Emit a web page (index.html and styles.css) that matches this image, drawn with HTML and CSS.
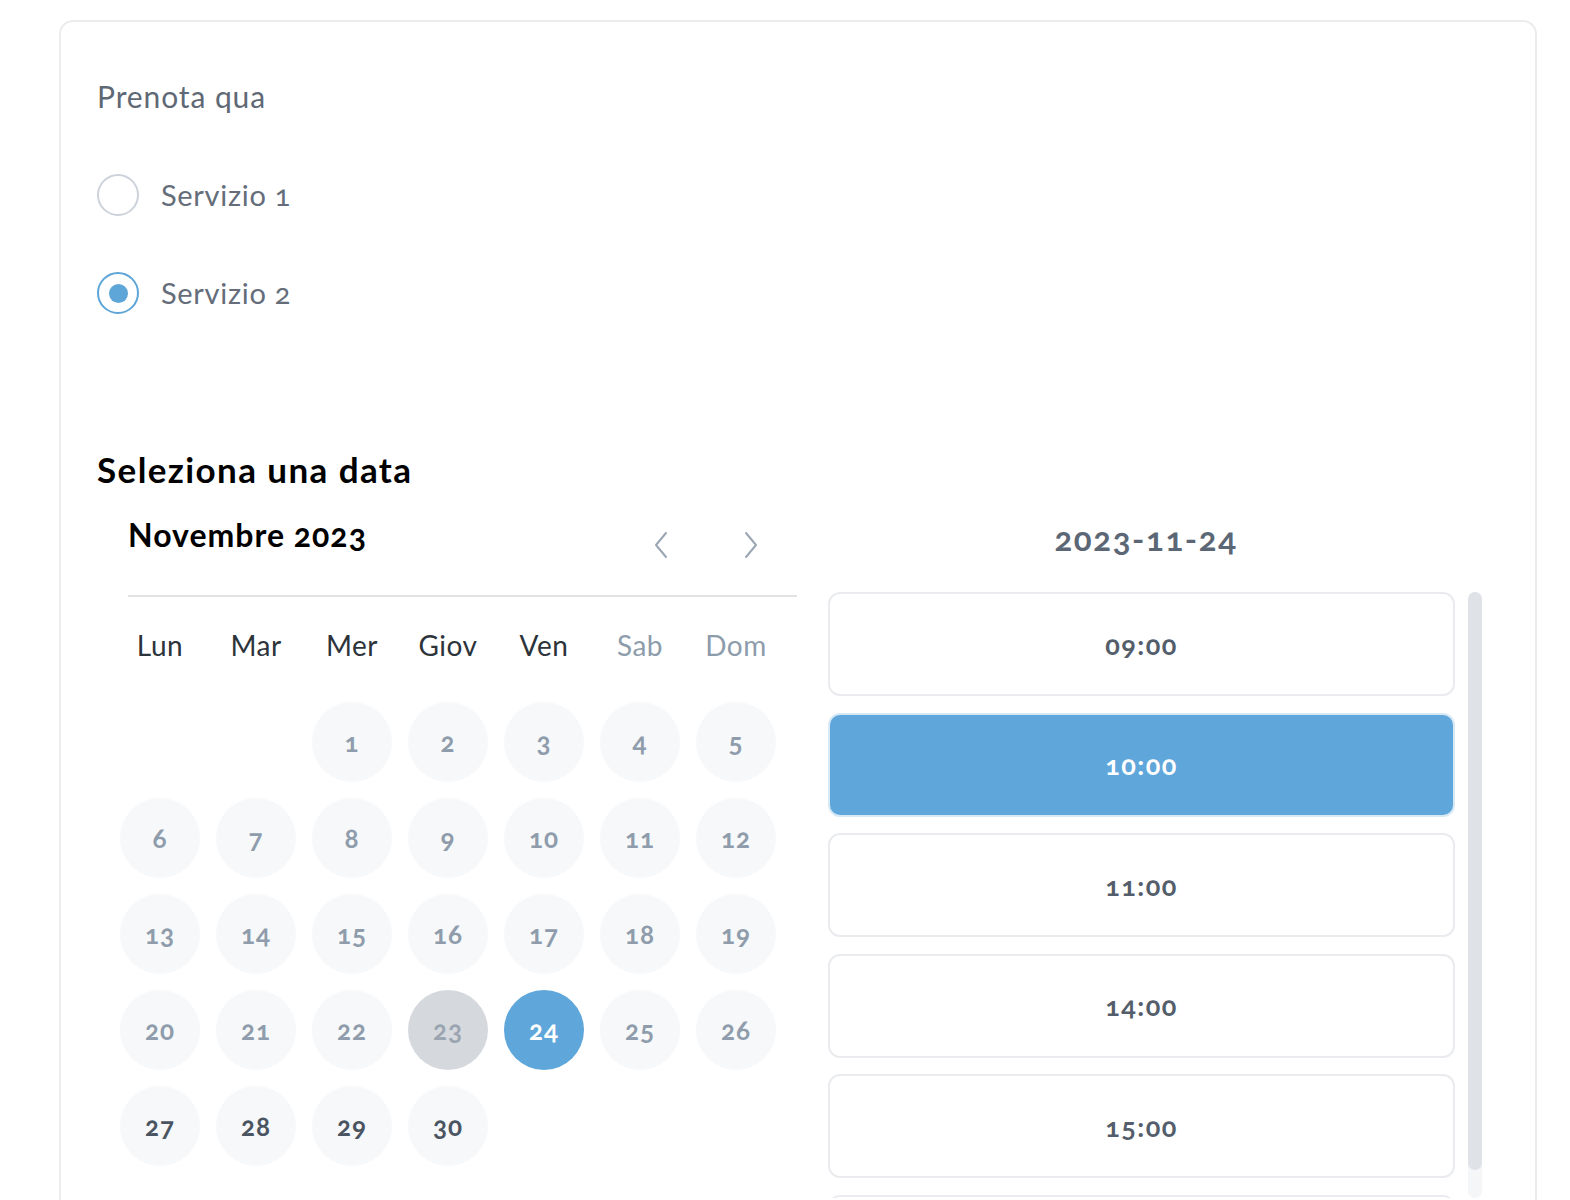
FILE: index.html
```html
<!DOCTYPE html>
<html lang="it">
<head>
    <meta charset="UTF-8">
    <meta name="viewport" content="width=device-width, initial-scale=1.0">
    <title>Prenota</title>
    <link rel="stylesheet" href="styles.css">
</head>
<body>
    <div class="card">
        <div class="section-label">Prenota qua</div>
        <div class="services">
            <label class="service">
                <span class="radio"></span>
                <span class="service-name">Servizio 1</span>
            </label>
            <label class="service">
                <span class="radio checked"></span>
                <span class="service-name">Servizio 2</span>
            </label>
        </div>

        <h2 class="date-title">Seleziona una data</h2>

        <div class="booking">
            <div class="calendar">
                <div class="cal-header">
                    <div class="month">Novembre 2023</div>
                    <div class="nav">
                        <button class="nav-btn">
                            <svg width="16" height="28" viewBox="0 0 16 28"><path d="M13 2 L3 14 L13 26" fill="none" stroke="#9aa6b3" stroke-width="2" stroke-linecap="round" stroke-linejoin="round"/></svg>
                        </button>
                        <button class="nav-btn">
                            <svg width="16" height="28" viewBox="0 0 16 28"><path d="M3 2 L13 14 L3 26" fill="none" stroke="#9aa6b3" stroke-width="2" stroke-linecap="round" stroke-linejoin="round"/></svg>
                        </button>
                    </div>
                </div>
                <div class="weekdays">
                    <span>Lun</span><span>Mar</span><span>Mer</span><span>Giov</span><span>Ven</span>
                    <span class="weekend">Sab</span><span class="weekend">Dom</span>
                </div>
                <div class="days">
                    <span class="empty"></span><span class="empty"></span>
                    <span class="day">1</span><span class="day">2</span><span class="day">3</span><span class="day">4</span><span class="day">5</span>
                    <span class="day">6</span><span class="day">7</span><span class="day">8</span><span class="day">9</span><span class="day">10</span><span class="day">11</span><span class="day">12</span>
                    <span class="day">13</span><span class="day">14</span><span class="day">15</span><span class="day">16</span><span class="day">17</span><span class="day">18</span><span class="day">19</span>
                    <span class="day">20</span><span class="day">21</span><span class="day">22</span><span class="day today">23</span><span class="day selected">24</span><span class="day">25</span><span class="day">26</span>
                    <span class="day open">27</span><span class="day open">28</span><span class="day open">29</span><span class="day open">30</span>
                </div>
            </div>

            <div class="times">
                <div class="times-title">2023-11-24</div>
                <div class="times-body">
                    <div class="slots">
                        <button class="slot">09:00</button>
                        <button class="slot active">10:00</button>
                        <button class="slot">11:00</button>
                        <button class="slot">14:00</button>
                        <button class="slot">15:00</button>
                        <button class="slot"></button>
                    </div>
                    <div class="scrollbar"><div class="thumb"></div></div>
                </div>
            </div>
        </div>
    </div>
</body>
</html>
```

FILE: styles.css
```css
html, body {
    margin: 0;
    padding: 0;
    height: 1200px;
    overflow: hidden;
}
body {
    font-family: Lato, "Open Sans", sans-serif;
    font-variant-numeric: oldstyle-nums;
    background: #ffffff;
    color: #5f6875;
}
.card {
    box-sizing: border-box;
    margin: 20px 0 0 59px;
    width: 1478px;
    min-height: 1300px;
    border: 2px solid #ececec;
    border-radius: 14px;
    padding: 54px 36px 0 36px;
}
.section-label {
    font-size: 30px;
    line-height: 40px;
    letter-spacing: 0.9px;
    color: #5f6875;
}
.services {
    margin-top: 58px;
    display: flex;
    flex-direction: column;
    gap: 56px;
}
.service {
    display: flex;
    align-items: center;
    gap: 22px;
}
.radio {
    width: 38px;
    height: 38px;
    border: 2px solid #cdd3da;
    border-radius: 50%;
    display: flex;
    align-items: center;
    justify-content: center;
}
.radio.checked {
    border-color: #5ea5d8;
}
.radio.checked::after {
    content: "";
    width: 19px;
    height: 19px;
    border-radius: 50%;
    background: #5ea5d8;
}
.service-name {
    font-size: 29px;
    line-height: 40px;
    letter-spacing: 0.7px;
    color: #646d79;
}
.date-title {
    margin: 133px 0 0 0;
    font-size: 35px;
    line-height: 44px;
    font-weight: 700;
    letter-spacing: 1.4px;
    color: #000;
}
.booking {
    display: flex;
    gap: 31px;
}
.calendar {
    margin-left: 23px;
    width: 677px;
}
.cal-header {
    margin-left: 8px;
    height: 106px;
    box-sizing: border-box;
    padding-top: 24px;
    border-bottom: 2px solid #e2e2e2;
    display: flex;
    align-items: flex-start;
    justify-content: space-between;
}
.month {
    font-size: 32px;
    line-height: 40px;
    font-weight: 700;
    letter-spacing: 1px;
    color: #000;
}
.nav {
    display: flex;
    gap: 74px;
    margin-right: 38px;
    margin-top: 16px;
}
.nav-btn {
    border: none;
    background: transparent;
    padding: 0;
    width: 16px;
    height: 28px;
    cursor: pointer;
}
.weekdays {
    margin-top: 28px;
    display: grid;
    grid-template-columns: repeat(7, 80px);
    column-gap: 16px;
    height: 40px;
    line-height: 40px;
    font-size: 28px;
    letter-spacing: 0.5px;
    color: #2d333a;
    text-align: center;
}
.weekdays .weekend {
    color: #8d9cab;
}
.days {
    margin-top: 37px;
    display: grid;
    grid-template-columns: repeat(7, 80px);
    grid-auto-rows: 80px;
    gap: 16px;
}
.day {
    border-radius: 50%;
    background: #f6f8fa;
    color: #8f9cab;
    font-size: 26px;
    font-weight: 700;
    letter-spacing: 1px;
    display: flex;
    align-items: center;
    justify-content: center;
}
.day.open {
    color: #4b5562;
}
.day.today {
    background: #d5d9de;
    color: #9ba5b1;
}
.day.selected {
    background: #5fa6db;
    color: #ffffff;
}
.times {
    width: 660px;
}
.times-title {
    margin-top: 25px;
    width: 626px;
    padding-left: 10px;
    box-sizing: border-box;
    text-align: center;
    font-size: 33px;
    line-height: 44px;
    font-weight: 700;
    letter-spacing: 1.6px;
    color: #5c6775;
}
.times-body {
    margin-top: 32px;
    display: flex;
    gap: 13px;
    height: 606px;
    overflow: hidden;
}
.slots {
    width: 627px;
    flex: none;
    display: flex;
    flex-direction: column;
    gap: 16.6px;
}
.slot {
    flex: none;
    height: 104px;
    border: 2px solid #e9ebee;
    border-radius: 12px;
    background: #ffffff;
    font-family: Lato, "Open Sans", sans-serif;
    font-variant-numeric: oldstyle-nums;
    font-size: 27px;
    font-weight: 700;
    letter-spacing: 1.4px;
    color: #545e6b;
    cursor: pointer;
}
.slot.active {
    background: #5fa6db;
    border-color: #d8e9f6;
    color: #ffffff;
}
.scrollbar {
    flex: none;
    width: 14px;
    height: 606px;
    background: #f4f6f8;
    border-radius: 7px;
}
.thumb {
    height: 578px;
    background: #dfe3e8;
    border-radius: 7px;
}
```
